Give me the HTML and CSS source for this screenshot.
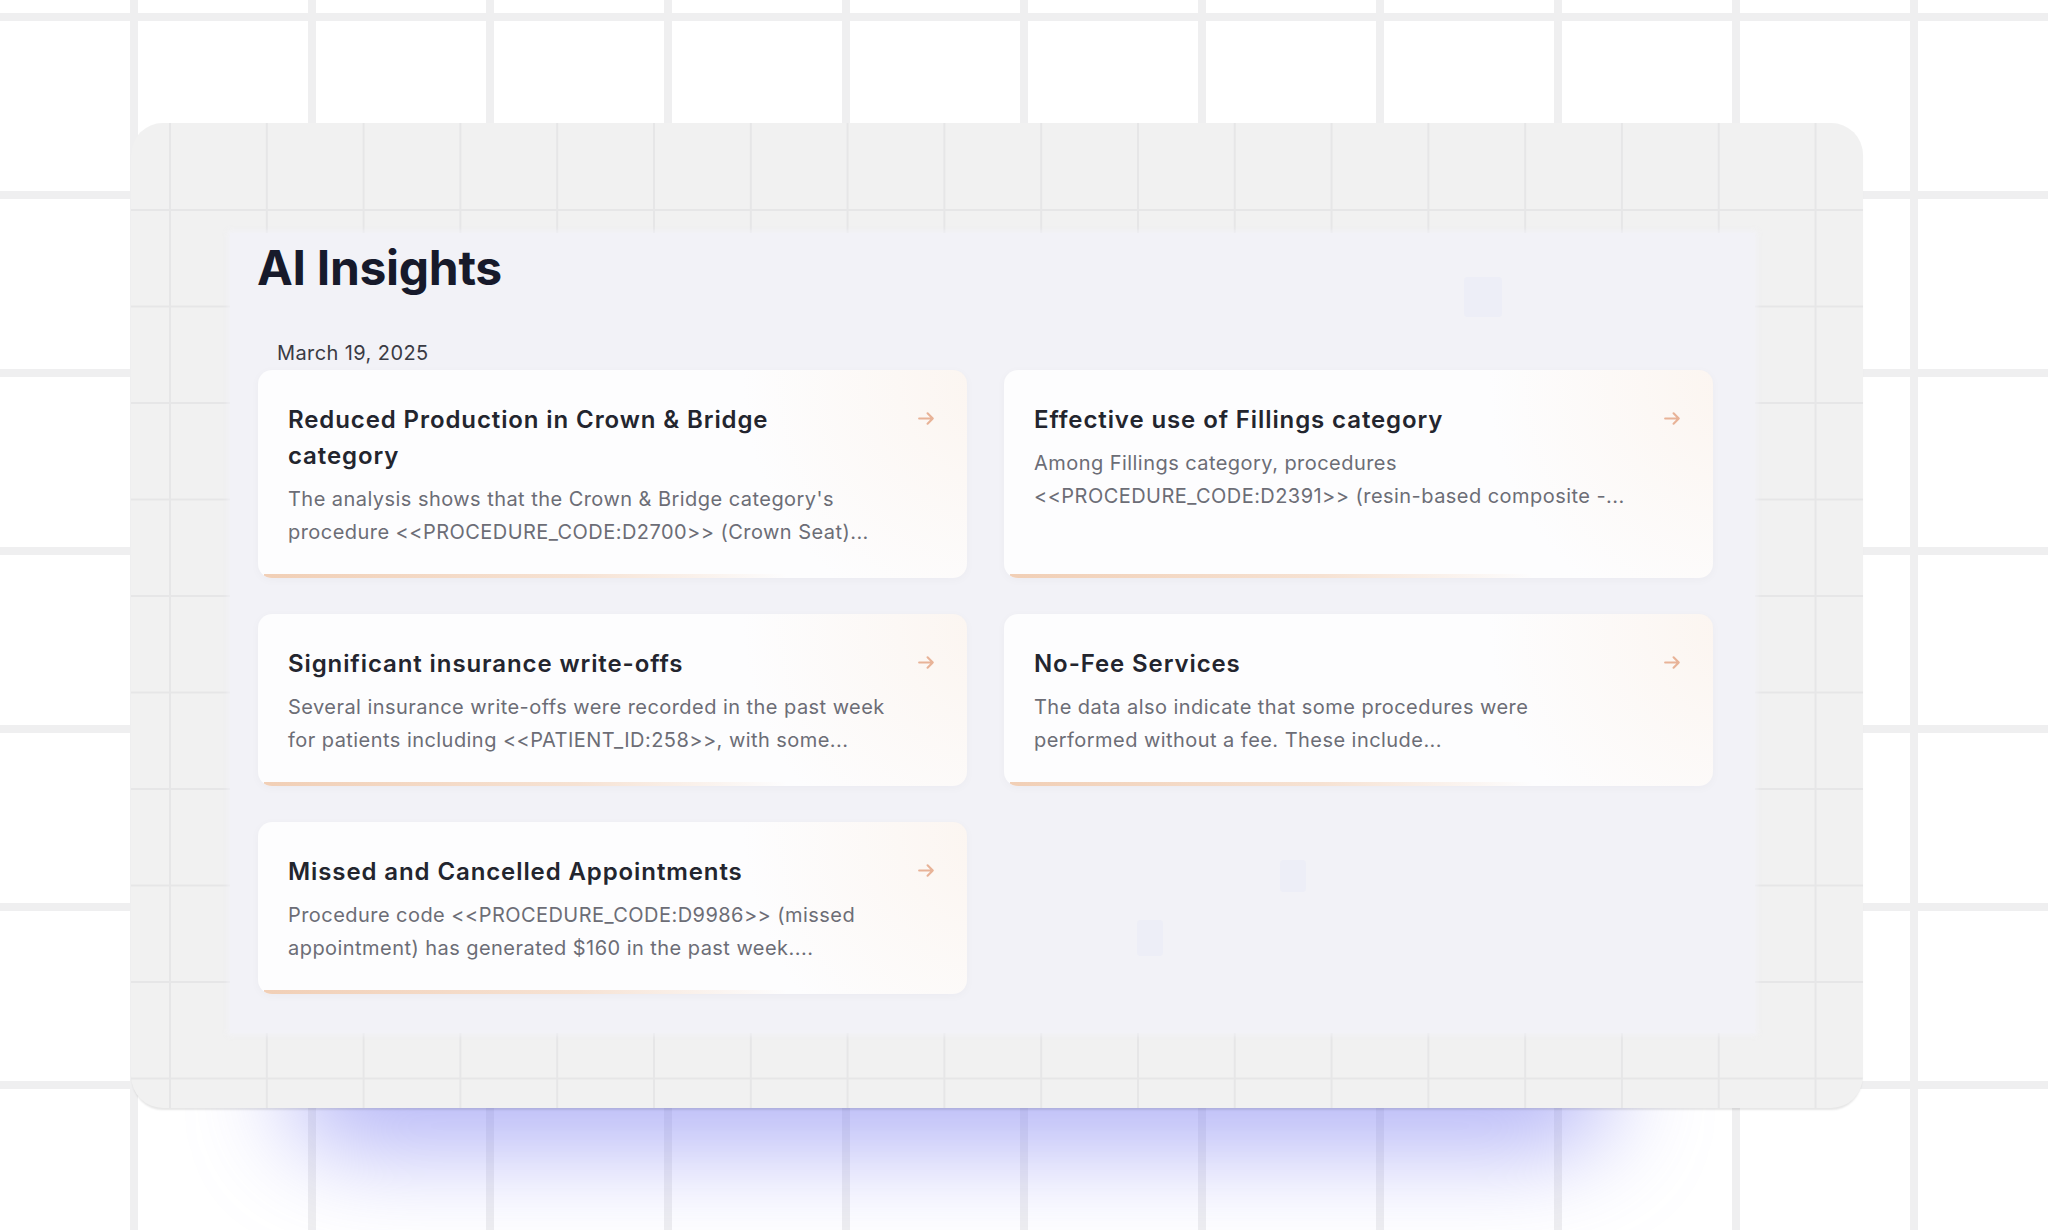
FILE: index.html
```html
<!DOCTYPE html>
<html lang="en">
  <head>
    <meta charset="UTF-8" />
    <meta name="viewport" content="width=device-width, initial-scale=1.0" />
    <title>AI Insights</title>
    <link rel="stylesheet" href="styles.css">
  </head>

  <body>
    <div class="glow"></div>

    <section class="panel">
      <div class="insights">
        <h1>AI Insights</h1>
        <div class="date">March 19, 2025</div>

        <div class="cards">
          <article class="card">
            <div class="card-head">
              <h3>Reduced Production in Crown &amp; Bridge category</h3>
              <svg class="arrow" viewBox="0 0 20 20"><path d="M3 10h13M11 5l5 5-5 5" /></svg>
            </div>
            <p>The analysis shows that the Crown &amp; Bridge category's procedure &lt;&lt;PROCEDURE_CODE:D2700&gt;&gt; (Crown Seat)...</p>
          </article>

          <article class="card">
            <div class="card-head">
              <h3>Effective use of Fillings category</h3>
              <svg class="arrow" viewBox="0 0 20 20"><path d="M3 10h13M11 5l5 5-5 5" /></svg>
            </div>
            <p>Among Fillings category, procedures &lt;&lt;PROCEDURE_CODE:D2391&gt;&gt; (resin-based composite -...</p>
          </article>

          <article class="card">
            <div class="card-head">
              <h3>Significant insurance write-offs</h3>
              <svg class="arrow" viewBox="0 0 20 20"><path d="M3 10h13M11 5l5 5-5 5" /></svg>
            </div>
            <p>Several insurance write-offs were recorded in the past week for patients including &lt;&lt;PATIENT_ID:258&gt;&gt;, with some...</p>
          </article>

          <article class="card">
            <div class="card-head">
              <h3>No-Fee Services</h3>
              <svg class="arrow" viewBox="0 0 20 20"><path d="M3 10h13M11 5l5 5-5 5" /></svg>
            </div>
            <p>The data also indicate that some procedures were<br>performed without a fee. These include...</p>
          </article>

          <article class="card">
            <div class="card-head">
              <h3>Missed and Cancelled Appointments</h3>
              <svg class="arrow" viewBox="0 0 20 20"><path d="M3 10h13M11 5l5 5-5 5" /></svg>
            </div>
            <p>Procedure code &lt;&lt;PROCEDURE_CODE:D9986&gt;&gt; (missed appointment) has generated $160 in the past week....</p>
          </article>
        </div>

        <!-- faint leftovers from the app behind -->
        <span class="ghost ghost-a"></span>
        <span class="ghost ghost-b"></span>
        <span class="ghost ghost-c"></span>
      </div>
    </section>
  </body>
</html>
```

FILE: styles.css
```css
body {
  font-family: Inter, "Noto Sans", sans-serif;
  margin: 0;
  height: 1230px;
  overflow: hidden;
  position: relative;
  box-sizing: border-box;
  padding: 123px 0 0 131px;
  background-color: #fff;
  background-image:
    linear-gradient(90deg, #efeff0 8px, transparent 8px),
    linear-gradient(180deg, #efeff0 8px, transparent 8px);
  background-size: 178px 178px;
  background-position: 130px 13px;
}

/* indigo glow under the panel */
.glow {
  position: absolute;
  left: 290px;
  top: 1025px;
  width: 1320px;
  height: 120px;
  border-radius: 80px;
  background: rgba(118, 120, 240, 0.6);
  filter: blur(50px);
}

.panel {
  position: relative;
  width: 1732px;
  height: 985px;
  box-sizing: border-box;
  padding: 110px 0 0 99px;
  border-radius: 32px;
  background-color: #f1f1f1;
  background-image:
    linear-gradient(90deg, #e6e6e7 1.5px, transparent 1.5px),
    linear-gradient(180deg, #e6e6e7 1.5px, transparent 1.5px);
  background-size: 96.8px 96.5px;
  background-position: 38px 86px;
  box-shadow: 0 3px 2px -1px rgba(0, 0, 0, 0.1);
}

.insights {
  position: relative;
  width: 1525px;
  height: 800px;
  box-sizing: border-box;
  padding: 6px 0 0 27px;
  background-color: #f2f2f7;
  box-shadow: 0 0 6px 2px rgba(242, 242, 247, 0.9);
}

h1 {
  margin: 0;
  font-size: 48px;
  line-height: 58px;
  font-weight: 700;
  color: #171a2b;
  letter-spacing: -0.3px;
}

.date {
  margin: 44px 0 0 20px;
  font-size: 20px;
  line-height: 24px;
  letter-spacing: 0.4px;
  color: #3a3b44;
}

.cards {
  display: grid;
  grid-template-columns: 709px 709px;
  column-gap: 37px;
  row-gap: 36px;
  margin: 5px 0 0 1px;
}

.card {
  position: relative;
  padding: 32px 30px 29px 30px;
  border-radius: 14px;
  background-color: #fdfdfe;
  background-image: radial-gradient(circle 260px at 105% 5%, rgba(250, 236, 224, 0.5), rgba(255, 255, 255, 0) 100%);
  box-shadow: 0 2px 10px rgba(30, 30, 60, 0.03);
  overflow: hidden;
}

.card::after {
  content: "";
  position: absolute;
  left: 6px;
  right: 6px;
  bottom: 0;
  height: 4px;
  background: linear-gradient(90deg, #f1cfb6 0%, #f6e2d3 45%, rgba(255, 255, 255, 0) 75%);
}

.card-head {
  display: flex;
  justify-content: space-between;
  align-items: flex-start;
}

.card h3 {
  margin: 0;
  max-width: 540px;
  font-size: 24px;
  line-height: 36px;
  font-weight: 600;
  letter-spacing: 0.9px;
  color: #23252e;
}

.arrow {
  width: 21px;
  height: 21px;
  margin-top: 6px;
  fill: none;
  stroke: #e8b398;
  stroke-width: 2;
  stroke-linecap: round;
  stroke-linejoin: round;
}

.card p {
  margin: 9px 0 0;
  max-width: 620px;
  font-size: 20px;
  line-height: 33px;
  letter-spacing: 0.45px;
  color: #6c6d76;
}

.ghost {
  position: absolute;
  border-radius: 4px;
  background-color: rgba(210, 218, 246, 0.15);
}

.ghost-a {
  left: 1234px;
  top: 44px;
  width: 38px;
  height: 40px;
}

.ghost-b {
  left: 1050px;
  top: 627px;
  width: 26px;
  height: 32px;
}

.ghost-c {
  left: 907px;
  top: 687px;
  width: 26px;
  height: 36px;
}
```
